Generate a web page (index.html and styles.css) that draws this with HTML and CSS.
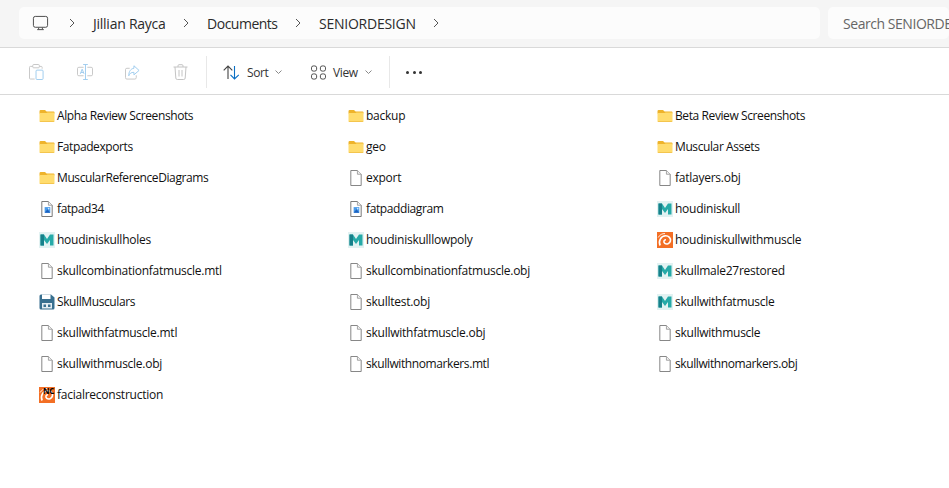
FILE: index.html
```html
<!DOCTYPE html>
<html lang="en">
<head>
  <meta charset="UTF-8">
  <meta name="viewport" content="width=device-width, initial-scale=1.0">
  <title>SENIORDESIGN</title>
  <link rel="stylesheet" href="styles.css">
</head>
<body>
  <svg class="sprite" width="0" height="0">
    <defs>
      <symbol id="folder" viewBox="0 0 16 16">
        <path d="M0.500 3.200Q0.500 2 1.700 2H6L7.600 3.500H14.600Q15.500 3.500 15.500 4.500V5.500H0.500Z" fill="#eeb32b"/>
        <path d="M0.500 5H7.600L8.600 4.400H14.600Q15.500 4.400 15.500 5.400V13Q15.500 14 14.500 14H1.500Q0.500 14 0.500 13Z" fill="#ffdc6e"/>
        <path d="M0.500 13.400H15.500V13.200Q15.500 14 14.500 14H1.500Q0.500 14 0.500 13.200Z" fill="#e9ae2c"/>
      </symbol>
      <symbol id="file" viewBox="0 0 16 17">
        <path d="M2.500 0.500H9.500L13.500 4.500V16.500H2.500Z" fill="#fff" stroke="#7d7d7d"/>
        <path d="M9.500 0.500V4.500H13.500" fill="#f2f2f2" stroke="#a0a0a0"/>
      </symbol>
      <symbol id="image" viewBox="0 0 16 17">
        <path d="M2.500 0.500H9.500L13.500 4.500V16.500H2.500Z" fill="#fff" stroke="#6f6f6f"/>
        <path d="M9.500 0.500V4.500H13.500" fill="#f2f2f2" stroke="#a0a0a0"/>
        <rect x="5.500" y="6.500" width="6" height="6" fill="#4a9bea"/>
        <path d="M5.500 12.500L8.500 8.800L11.500 12.500Z" fill="#1c62c0"/>
        <circle cx="9.800" cy="8" r="0.900" fill="#cfe8ff"/>
      </symbol>
      <symbol id="maya" viewBox="0 0 16 16">
        <rect width="16" height="16" fill="#e2f2f2"/>
        <path d="M1.500 13.500V2.500H5L8 7L11 2.500H14.500V13.500H11V8L8 12L5 8V13.500Z" fill="#26aaa8"/>
        <path d="M1.500 13.500V2.500H5V13.500Z" fill="#16808a"/>
      </symbol>
      <symbol id="houdini" viewBox="0 0 16 16">
        <rect width="16" height="16" fill="#f36f25"/>
        <path d="M3.200 13.500C1 9.500 3.800 3.800 8.600 3.800C11.800 3.800 14 6.200 13.400 9C12.800 11.800 9.600 12.800 7.800 11.400C6.200 10.100 6.800 7.600 9 7.700" fill="none" stroke="#fff" stroke-width="1.600"/>
        <path d="M1.200 5.500C2.800 2.600 5.400 1.400 8 1.600" fill="none" stroke="#fff" stroke-width="0.900"/>
      </symbol>
      <symbol id="save" viewBox="0 0 16 16">
        <path d="M0.500 2Q0.500 0.500 2 0.500H12L15.500 3.500V14Q15.500 15.500 14 15.500H2Q0.500 15.500 0.500 14Z" fill="#386f8f"/>
        <rect x="3" y="0.500" width="8.500" height="4.500" fill="#fff"/>
        <rect x="3" y="9" width="10" height="5.500" fill="#e4edf2"/>
        <rect x="4.500" y="10.500" width="2.500" height="2.500" fill="#386f8f"/>
        <rect x="9" y="10.500" width="2.500" height="2.500" fill="#386f8f"/>
      </symbol>
    </defs>
  </svg>

  <header class="addressbar">
    <nav class="crumbs">
      <svg class="pc-icon" width="17" height="17" viewBox="0 0 18 18" fill="none" stroke="#444">
        <rect x="1.500" y="1.500" width="15" height="11.500" rx="2"/>
        <path d="M5.500 15.500H12.500M7 13.500V15M11 13.500V15"/>
      </svg>
      <svg class="chev" width="6" height="10" viewBox="0 0 6 10"><path d="M1 1L5 5L1 9"/></svg>
      <span>Jillian Rayca</span>
      <svg class="chev" width="6" height="10" viewBox="0 0 6 10"><path d="M1 1L5 5L1 9"/></svg>
      <span class="narrow">Documents</span>
      <svg class="chev" width="6" height="10" viewBox="0 0 6 10"><path d="M1 1L5 5L1 9"/></svg>
      <span>SENIORDESIGN</span>
      <svg class="chev" width="6" height="10" viewBox="0 0 6 10"><path d="M1 1L5 5L1 9"/></svg>
    </nav>
    <div class="search">Search SENIORDESIGN</div>
  </header>

  <div class="toolbar">
    <div class="tool-group">
      <svg width="15" height="16" viewBox="0 0 16 17" fill="none">
        <path d="M4 2.500H1.500Q0.500 2.500 0.500 3.500V15Q0.500 16 1.500 16H6M11 2.500H13Q14 2.500 14 3.500V5" stroke="#c4c4c4"/>
        <rect x="4" y="0.500" width="7" height="3.500" rx="1" stroke="#c4c4c4"/>
        <rect x="7.500" y="6.500" width="7.500" height="10" rx="1" stroke="#9ccbee"/>
      </svg>
      <svg width="16" height="16" viewBox="0 0 17 17" fill="none">
        <path d="M7 3.500H2Q0.500 3.500 0.500 5V11Q0.500 12.500 2 12.500H7M11 3.500H15Q16.500 3.500 16.500 5V11Q16.500 12.500 15 12.500H11" stroke="#c4c4c4"/>
        <path d="M6.500 0.500H11.500M9 0.500V16.500M6.500 16.500H11.500" stroke="#9ccbee"/>
        <path d="M3.500 10.500L5.500 5.500L7.500 10.500M4.200 9H6.800" stroke="#9ccbee"/>
      </svg>
      <svg width="15" height="15" viewBox="0 0 16 16" fill="none">
        <path d="M5 3.500H2Q0.500 3.500 0.500 5V13.500Q0.500 15 2 15H10.500Q12 15 12 13.500V11" stroke="#c4c4c4"/>
        <path d="M9.500 0.800L15 5.800L9.500 10.500V7.800C6.500 7.800 5 9 4 11.500C4 7 6 4 9.500 3.500Z" stroke="#9ccbee"/>
      </svg>
      <svg width="15" height="16" viewBox="0 0 15 16" fill="none" stroke="#c4c4c4">
        <path d="M0.500 3H14.500M5 3V1.800Q5 0.700 6 0.700H9Q10 0.700 10 1.800V3M2 3L2.800 14Q2.900 15.500 4.300 15.500H10.700Q12.100 15.500 12.200 14L13 3M6 6V12.500M9 6V12.500"/>
      </svg>
    </div>
    <div class="divider"></div>
    <div class="tool-btn sort-btn">
      <svg width="17" height="15" viewBox="0 0 17 15" fill="none" stroke-width="1.100">
        <path d="M5 14V1M0.700 5.300L5 1L9.300 5.300" stroke="#444"/>
        <path d="M11.500 1V14M7.500 9.800L11.500 14L15.800 9.800" stroke="#0a6fc4"/>
      </svg>
      <span>Sort</span>
      <svg class="caret" width="7" height="4" viewBox="0 0 7 4"><path d="M0.500 0.500L3.500 3.500L6.500 0.500"/></svg>
    </div>
    <div class="tool-btn view-btn">
      <svg width="15" height="15" viewBox="0 0 16 15" fill="none" stroke="#444">
        <rect x="0.500" y="0.500" width="5.500" height="5.500" rx="2"/>
        <rect x="10" y="0.500" width="5.500" height="5.500" rx="2"/>
        <rect x="0.500" y="9" width="5.500" height="5.500" rx="2"/>
        <rect x="10" y="9" width="5.500" height="5.500" rx="2"/>
      </svg>
      <span>View</span>
      <svg class="caret" width="7" height="4" viewBox="0 0 7 4"><path d="M0.500 0.500L3.500 3.500L6.500 0.500"/></svg>
    </div>
    <div class="divider"></div>
    <div class="more"><i></i><i></i><i></i></div>
  </div>

  <main class="files">
    <div class="file tight"><svg class="ico"><use href="#folder"/></svg>Alpha Review Screenshots</div>
    <div class="file"><svg class="ico"><use href="#folder"/></svg>backup</div>
    <div class="file tight"><svg class="ico"><use href="#folder"/></svg>Beta Review Screenshots</div>

    <div class="file tight"><svg class="ico"><use href="#folder"/></svg>Fatpadexports</div>
    <div class="file"><svg class="ico"><use href="#folder"/></svg>geo</div>
    <div class="file tight"><svg class="ico"><use href="#folder"/></svg>Muscular Assets</div>

    <div class="file tight"><svg class="ico"><use href="#folder"/></svg>MuscularReferenceDiagrams</div>
    <div class="file"><svg class="ico"><use href="#file"/></svg>export</div>
    <div class="file"><svg class="ico"><use href="#file"/></svg>fatlayers.obj</div>

    <div class="file tight"><svg class="ico"><use href="#image"/></svg>fatpad34</div>
    <div class="file tight"><svg class="ico"><use href="#image"/></svg>fatpaddiagram</div>
    <div class="file"><svg class="ico"><use href="#maya"/></svg>houdiniskull</div>

    <div class="file"><svg class="ico"><use href="#maya"/></svg>houdiniskullholes</div>
    <div class="file"><svg class="ico"><use href="#maya"/></svg>houdiniskulllowpoly</div>
    <div class="file"><svg class="ico"><use href="#houdini"/></svg>houdiniskullwithmuscle</div>

    <div class="file"><svg class="ico"><use href="#file"/></svg>skullcombinationfatmuscle.mtl</div>
    <div class="file"><svg class="ico"><use href="#file"/></svg>skullcombinationfatmuscle.obj</div>
    <div class="file"><svg class="ico"><use href="#maya"/></svg>skullmale27restored</div>

    <div class="file tight"><svg class="ico"><use href="#save"/></svg>SkullMusculars</div>
    <div class="file"><svg class="ico"><use href="#file"/></svg>skulltest.obj</div>
    <div class="file"><svg class="ico"><use href="#maya"/></svg>skullwithfatmuscle</div>

    <div class="file"><svg class="ico"><use href="#file"/></svg>skullwithfatmuscle.mtl</div>
    <div class="file"><svg class="ico"><use href="#file"/></svg>skullwithfatmuscle.obj</div>
    <div class="file"><svg class="ico"><use href="#file"/></svg>skullwithmuscle</div>

    <div class="file"><svg class="ico"><use href="#file"/></svg>skullwithmuscle.obj</div>
    <div class="file tight"><svg class="ico"><use href="#file"/></svg>skullwithnomarkers.mtl</div>
    <div class="file tight"><svg class="ico"><use href="#file"/></svg>skullwithnomarkers.obj</div>

    <div class="file"><span class="nc-wrap"><svg class="ico"><use href="#houdini"/></svg><b class="nc">NC</b></span>facialreconstruction</div>
  </main>
</body>
</html>
```

FILE: styles.css
```css
:root {
  --text: #111;
  --line: #d9d9d9;
}
body {
  margin: 0;
  height: 488px;
  background: #fff;
  color: var(--text);
  font-family: "Open Sans", "Noto Sans", sans-serif;
  font-size: 12px;
  overflow: hidden;
}
.sprite {
  position: absolute;
}

/* address bar */
.addressbar {
  display: flex;
  gap: 8px;
  height: 48px;
  box-sizing: border-box;
  padding: 7px 0 0 19px;
  background: #f5f5f5;
  border-bottom: 1px solid var(--line);
}
.crumbs, .search {
  height: 32px;
  background: #fcfcfc;
  border-radius: 5px;
  display: flex;
  align-items: center;
  font-size: 14px;
}
.crumbs {
  flex: none;
  width: 801px;
  padding-left: 13px;
  box-sizing: border-box;
  letter-spacing: -0.25px;
}
.crumbs span {
  margin: 0 17.5px 0 18px;
  color: #2b2b2b;
}
.crumbs .narrow {
  letter-spacing: -0.5px;
}
.pc-icon {
  margin-right: 20px;
}
.chev {
  fill: none;
  stroke: #555;
  flex: none;
}
.search {
  flex: 1;
  padding-left: 15px;
  color: #666;
  letter-spacing: -0.45px;
  white-space: nowrap;
  overflow: hidden;
}

/* command bar */
.toolbar {
  height: 47px;
  box-sizing: border-box;
  display: flex;
  align-items: center;
  border-bottom: 1px solid var(--line);
  padding: 2px 0 0 29px;
}
.tool-group {
  display: flex;
  align-items: center;
  gap: 32.5px;
  width: 177px;
}
.divider {
  width: 1px;
  height: 32px;
  background: #e8e8e8;
}
.tool-btn {
  display: flex;
  align-items: center;
  color: #333;
  letter-spacing: -0.4px;
}
.sort-btn {
  margin-left: 16px;
  width: 88px;
}
.view-btn {
  width: 78px;
}
.tool-btn span {
  margin: 0 7px;
}
.caret {
  fill: none;
  stroke: #888;
}
.more {
  display: flex;
  gap: 3.5px;
  margin-left: 16px;
}
.more i {
  width: 3px;
  height: 3px;
  border-radius: 50%;
  background: #333;
}

/* file list */
.files {
  display: grid;
  grid-template-columns: repeat(3, 309px);
  grid-auto-rows: 31px;
  padding: 5px 0 0 39px;
}
.file {
  display: flex;
  align-items: center;
  gap: 2px;
  white-space: nowrap;
  letter-spacing: -0.25px;
}
.file.tight {
  letter-spacing: -0.4px;
}
.ico {
  width: 16px;
  height: 16px;
  flex: none;
}
.nc-wrap {
  position: relative;
  display: flex;
}
.nc {
  position: absolute;
  top: 0;
  left: 4px;
  font-size: 8px;
  line-height: 7px;
  letter-spacing: -0.3px;
  color: #000;
}
```
